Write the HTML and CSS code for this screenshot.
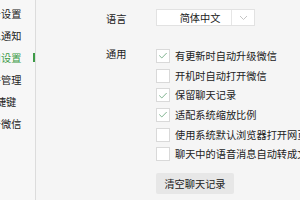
FILE: index.html
```html
<!DOCTYPE html>
<html lang="zh-CN">
<head>
<meta charset="utf-8">
<link rel="stylesheet" href="styles.css">
</head>
<body>
<div class="window">
  <nav class="sidebar">
    <div class="nav-item"><span>账号设置</span></div>
    <div class="nav-item"><span>消息通知</span></div>
    <div class="nav-item active"><span>通用设置</span></div>
    <div class="nav-item"><span>文件管理</span></div>
    <div class="nav-item"><span>快捷键</span></div>
    <div class="nav-item"><span>关于微信</span></div>
  </nav>
  <main class="content">
    <div class="row lang-row">
      <div class="label">语言</div>
      <div class="select">
        <div class="select-value">简体中文</div>
        <div class="select-arrow">
          <svg width="9" height="6" viewBox="0 0 9 6"><polyline points="1,1 4.5,4.5 8,1" fill="none" stroke="#c4c4c4" stroke-width="1"/></svg>
        </div>
      </div>
    </div>
    <div class="row general-row">
      <div class="label">通用</div>
      <div class="options">
        <div class="option"><span class="box checked"><svg width="13" height="13" viewBox="0 0 13 13"><polyline points="2.5,6.5 5.2,9.2 10.5,3.8" fill="none" stroke="#74ad85" stroke-width="1"/></svg></span><span class="text">有更新时自动升级微信</span></div>
        <div class="option"><span class="box"></span><span class="text">开机时自动打开微信</span></div>
        <div class="option"><span class="box checked"><svg width="13" height="13" viewBox="0 0 13 13"><polyline points="2.5,6.5 5.2,9.2 10.5,3.8" fill="none" stroke="#74ad85" stroke-width="1"/></svg></span><span class="text">保留聊天记录</span></div>
        <div class="option"><span class="box checked"><svg width="13" height="13" viewBox="0 0 13 13"><polyline points="2.5,6.5 5.2,9.2 10.5,3.8" fill="none" stroke="#74ad85" stroke-width="1"/></svg></span><span class="text">适配系统缩放比例</span></div>
        <div class="option"><span class="box"></span><span class="text">使用系统默认浏览器打开网页</span></div>
        <div class="option"><span class="box"></span><span class="text">聊天中的语音消息自动转成文字</span></div>
        <button class="btn">清空聊天记录</button>
      </div>
    </div>
  </main>
</div>
</body>
</html>
```
FILE: styles.css
```css
html, body {
  margin: 0;
  padding: 0;
  width: 300px;
  height: 200px;
  overflow: hidden;
  background: #f5f5f5;
}
body {
  font-family: "Noto Sans CJK SC", "Noto Sans", sans-serif;
  font-size: 10.2px;
  color: #222;
}
.window {
  display: flex;
  width: 300px;
  height: 200px;
}
.sidebar {
  width: 35px;
  flex: none;
  border-right: 1px solid #dcdcdc;
  background: #f7f7f7;
  padding-top: 3px;
  overflow: hidden;
}
.nav-item {
  position: relative;
  height: 22px;
  line-height: 22px;
  white-space: nowrap;
}
.nav-item span {
  display: block;
  width: 70px;
  margin-left: -34px;
  text-align: center;
}
.nav-item.active span {
  color: #3d9b47;
}
.nav-item.active::after {
  content: "";
  position: absolute;
  right: 0;
  top: 6px;
  width: 2px;
  height: 9px;
  background: #3d9b47;
}
.content {
  flex: 1;
  padding-top: 9px;
  padding-left: 70px;
  overflow: hidden;
  white-space: nowrap;
}
.row {
  display: flex;
}
.label {
  width: 50px;
  flex: none;
}
.lang-row .label {
  line-height: 20px;
}
.select {
  display: flex;
  width: 97px;
  height: 15px;
  border: 1px solid #e2e2e2;
  background: #fff;
}
.select-value {
  width: 62px;
  padding-left: 12px;
  text-align: center;
  line-height: 15px;
  border-right: 1px solid #e6e6e6;
}
.select-arrow {
  flex: 1;
  display: flex;
  align-items: center;
  justify-content: center;
  padding-top: 1px;
}
.general-row {
  margin-top: 17px;
}
.general-row .label {
  line-height: 16px;
}
.options {
  display: flex;
  flex-direction: column;
}
.option {
  display: flex;
  align-items: center;
  height: 19.7px;
}
.box {
  width: 12px;
  height: 12px;
  border: 1px solid #d9d9d9;
  background: #fff;
  margin-right: 5px;
  flex: none;
  display: flex;
  align-items: center;
  justify-content: center;
}
.box svg {
  display: block;
}
.text {
  line-height: 14px;
}
.btn {
  margin-top: 9px;
  width: 78px;
  height: 21px;
  border: none;
  border-radius: 2px;
  background: #e7e7e7;
  font-family: inherit;
  font-size: 10.2px;
  color: #222;
  padding: 0;
}
```
